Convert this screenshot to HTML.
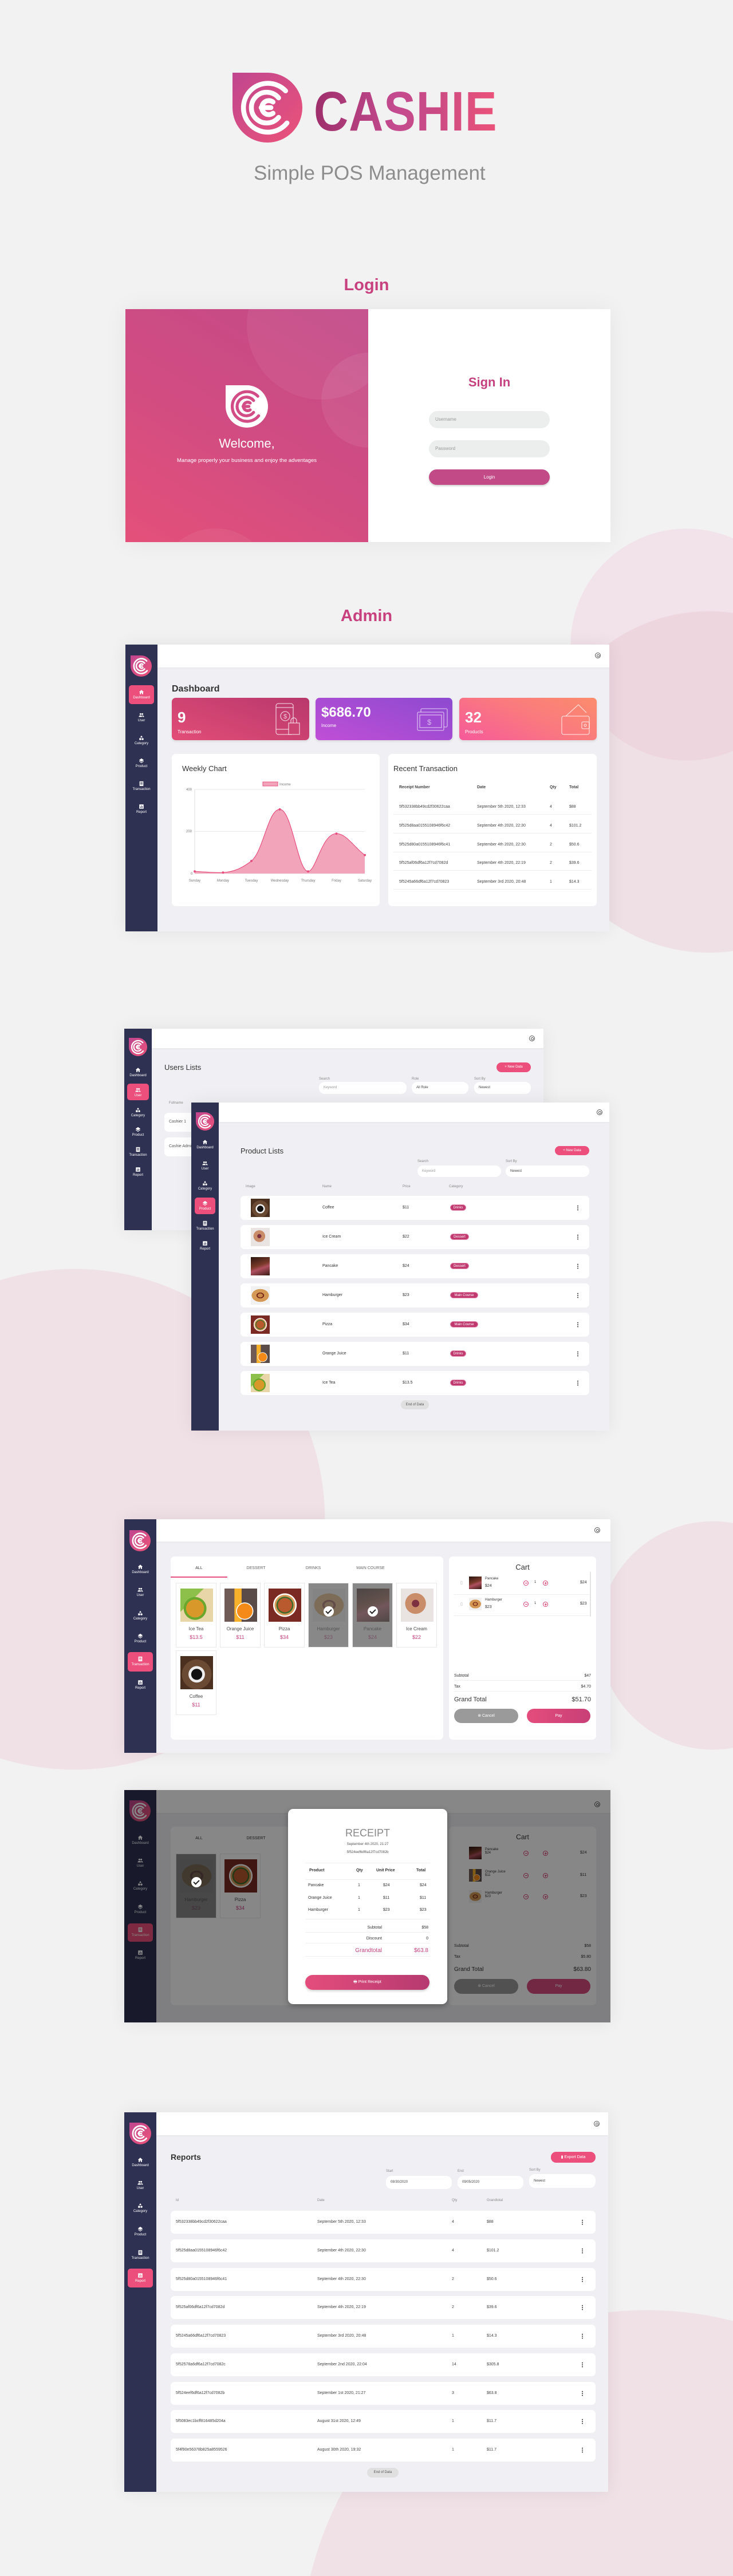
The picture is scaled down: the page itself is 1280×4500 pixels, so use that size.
<!DOCTYPE html>
<html style="overflow:hidden"><head><meta charset="utf-8">
<style>
*{box-sizing:border-box}
html{overflow:hidden;height:4500px}
body{margin:0;width:1280px;height:4500px;background:#f2f2f2;position:relative;overflow:hidden;font-family:"Liberation Sans",sans-serif;color:#333}
.a{position:absolute}
.circ{position:absolute;border-radius:50%;background:#f0e1e7}
.bc{position:absolute}
.fr{position:absolute;background:#f0f0f4;box-shadow:0 0 30px rgba(0,0,0,.07);overflow:hidden}
.sb{position:absolute;left:0;top:0;bottom:0;background:#2e3152}
.tb{position:absolute;top:0;right:0;background:#fff;box-shadow:0 1px 3px rgba(0,0,0,.05)}
.si{position:absolute;left:0;width:100%;text-align:center;color:#fff;font-size:6px;line-height:7px}
.si svg{display:block;margin:0 auto 2px;width:10px;height:10px;fill:#fff}
.act{position:absolute;background:#ec4f7c;border-radius:5px}
.lg{position:absolute}
.h{position:absolute;color:#c8417f;font-weight:bold;font-size:29px;width:100%;text-align:center;left:0}
.pf{position:absolute;width:10px;height:10px;border:1.3px solid #555;border-radius:50%}
.pf:after{content:"";position:absolute;left:2.2px;top:1.5px;width:3px;height:3px;border:1px solid #555;border-radius:50%}
.card{position:absolute;border-radius:7px;color:#fff;box-shadow:0 2px 4px rgba(0,0,0,.1)}
.pan{position:absolute;background:#fff;border-radius:7px}
.t{position:absolute;white-space:nowrap}
.row{position:absolute;background:#fff;border-radius:7px}
.dots{position:absolute;width:2px;height:10px;background:radial-gradient(circle,#444 0.9px,transparent 1.1px) 0 0/2px 3.4px}
.badge{position:absolute;height:11px;border-radius:6px;background:#c0396f;color:#fff;font-size:6px;line-height:11px;text-align:center;border:1px solid #e38cb0}
.inp{position:absolute;background:#fff;border-radius:10px;font-size:6px;color:#999;line-height:20px;padding-left:8px}
.btn{position:absolute;background:#ec4f7c;border-radius:9px;color:#fff;font-size:6px;text-align:center}
.f{position:absolute}
.coffee{background:radial-gradient(circle at 50% 55%,#111 0 22%,#eee 23% 33%,#6b4a33 34% 60%,#4b2f1f 61%)}
.ice{background:radial-gradient(circle at 45% 45%,#7d3040 0 14%,#c98d6a 15% 40%,#e9e4e2 41%)}
.pancake{background:linear-gradient(160deg,#2a1510,#7a3a2a 45%,#b05060 60%,#3a1a12)}
.burger{background:radial-gradient(ellipse 45% 35% at 50% 50%,#c98a4a 0 30%,#7a2a1a 31% 45%,#d49a55 46% 100%,transparent 101%),#f1f1f1}
.pizza{background:radial-gradient(circle,#b85a2d 0 30%,#3e6b2a 31% 36%,#d69a5a 37% 44%,#fff 45% 50%,#7a2a22 51%)}
.oj{background:radial-gradient(circle at 62% 68%,#f58a18 0 25%,#fff 26% 28%,transparent 29%),linear-gradient(90deg,#6f5a55 0 30%,#f6b02a 31% 52%,#5a4a48 53%)}
.tea{background:radial-gradient(circle at 45% 60%,#d9982a 0 33%,#6aa82d 34% 42%,transparent 43%),linear-gradient(135deg,#8cc04a 0 35%,#e8d6a8 36%)}
.pc{position:absolute;width:71px;height:113px;background:#fff;border:1px solid #e8e8e8}
.pc .f{left:7px;top:9px;width:57px;height:58px}
.pc .n{position:absolute;top:75px;width:100%;text-align:center;font-size:8px;color:#444}
.pc .p{position:absolute;top:89px;width:100%;text-align:center;font-size:9px;color:#c4407e}
.pc.sel:after{content:"";position:absolute;inset:0;background:rgba(90,90,90,.72)}
.chk{position:absolute;z-index:2;width:18px;height:18px;border-radius:50%;background:#fff;left:26px;top:40px}
.chk:after{content:"";position:absolute;left:6px;top:3px;width:4px;height:8px;border:solid #222;border-width:0 2px 2px 0;transform:rotate(45deg)}
.th{font-size:6px;color:#888}
.ci{position:absolute;width:9px;height:9px;border:1px solid #d83f70;border-radius:50%}
.ci:after{content:"";position:absolute;left:1.5px;top:3px;width:4px;height:1px;background:#d83f70}
.ci.pl:before{content:"";position:absolute;left:3px;top:1.5px;width:1px;height:4px;background:#d83f70}
</style></head><body>
<svg width="0" height="0" style="position:absolute;left:0;top:0">
<defs>
<linearGradient id="lgp" x1="0" y1="0" x2="1" y2="1"><stop offset="0" stop-color="#c0468f"/><stop offset="1" stop-color="#ec5379"/></linearGradient>
<symbol id="logo" viewBox="0 0 100 100"><path d="M0,0H50A50,50 0 1 1 0,50Z" fill="url(#lgp)"/><g fill="none" stroke="#fff" stroke-width="7" stroke-linecap="round"><path d="M76,26A35,35 0 1 0 78,72"/><path d="M66,36A22,22 0 1 0 66,64"/><path d="M58,42A10,10 0 1 0 58,58M41,50H55"/></g></symbol>
<symbol id="logow" viewBox="0 0 100 100"><path d="M0,0H50A50,50 0 1 1 0,50Z" fill="#fff"/><g fill="none" stroke="#d24c85" stroke-width="7" stroke-linecap="round"><path d="M76,26A35,35 0 1 0 78,72"/><path d="M66,36A22,22 0 1 0 66,64"/><path d="M58,42A10,10 0 1 0 58,58M41,50H55"/></g></symbol>
<symbol id="i1" viewBox="0 0 24 24"><path d="M12 3L2 12h3v9h5v-6h4v6h5v-9h3z"/></symbol>
<symbol id="i2" viewBox="0 0 24 24"><circle cx="8" cy="8" r="3.5"/><circle cx="16" cy="8" r="3.5"/><path d="M1 20c0-4 3-6 7-6s7 2 7 6zM14 14c4 0 9 1 9 6h-6c0-2-1-4-3-6z"/></symbol>
<symbol id="i3" viewBox="0 0 24 24"><path d="M12 2l5 8H7z"/><rect x="3" y="13" width="8" height="8"/><circle cx="17" cy="17" r="4"/></symbol>
<symbol id="i4" viewBox="0 0 24 24"><path d="M12 2l10 7-10 7L2 9zM4 13l8 6 8-6 2 1.5-10 7.5-10-7.5z"/></symbol>
<symbol id="i5" viewBox="0 0 24 24"><path fill-rule="evenodd" d="M4 2h16v20H4zM7 6h10v2H7zM7 10h10v2H7zM7 14h10v2H7z"/></symbol>
<symbol id="i6" viewBox="0 0 24 24"><path fill-rule="evenodd" d="M3 3h18v18H3zM7 12h2v6H7zM11 7h2v11h-2zM15 10h2v8h-2z"/></symbol>
</defs></svg>

<div class="bc" style="left:996px;top:923px;width:284px;height:406px;background:radial-gradient(circle 203px at 203px 203px,#f1e3e9 99.5%,transparent 100%)"></div>
<div class="bc" style="left:939px;top:1067px;width:341px;height:598px;background:radial-gradient(circle 299px at 299px 299px,rgba(232,190,205,.35) 99.5%,transparent 100%)"></div>
<div class="bc" style="left:0;top:2216px;width:568px;height:876px;background:radial-gradient(circle 438px at 130px 438px,#f0e1e7 99.7%,transparent 100%)"></div>
<div class="bc" style="left:1045px;top:2657px;width:235px;height:400px;background:radial-gradient(circle 200px at 200px 200px,#f0e1e7 99.5%,transparent 100%)"></div>
<div class="bc" style="left:525px;top:4035px;width:755px;height:465px;background:radial-gradient(circle 605px at 605px 605px,#f0e1e7 99.8%,transparent 100%)"></div>

<svg class="lg" style="left:406px;top:126px" width="122" height="124"><use href="#logo"/></svg>
<div class="t" style="left:548px;top:140px;font-size:97px;font-weight:bold;letter-spacing:1px;transform:scaleX(.86);transform-origin:left;background:linear-gradient(90deg,#9e2f6b,#c44b8f 45%,#c94a84 65%,#ec5379);-webkit-background-clip:text;background-clip:text;color:transparent;line-height:110px">CASHIE</div>
<div class="t" style="left:443px;top:283px;width:395px;text-align:center;font-size:35px;color:#8d8d8d">Simple POS Management</div>

<div class="h" style="top:482px">Login</div>
<div class="a" style="left:219px;top:540px;width:847px;height:407px;background:#fff;box-shadow:0 0 40px rgba(0,0,0,.06)">
 <div class="a" style="left:0;top:0;width:424px;height:407px;overflow:hidden;background:linear-gradient(30deg,#e4507a,#d04c82 50%,#c24a88)">
  <div class="circ" style="left:212px;top:-102px;width:260px;height:260px;background:rgba(255,255,255,.06)"></div>
  <div class="circ" style="left:342px;top:76px;width:166px;height:166px;background:rgba(255,255,255,.07)"></div>
  <div class="circ" style="left:57px;top:383px;width:200px;height:200px;background:rgba(255,255,255,.06)"></div>
  <svg class="lg" style="left:175px;top:133px" width="74" height="74"><use href="#logow"/></svg>
  <div class="t" style="left:0;width:424px;text-align:center;top:222px;color:#fff;font-size:22px">Welcome,</div>
  <div class="t" style="left:0;width:424px;text-align:center;top:259px;color:#fff;font-size:9.5px">Manage properly your business and enjoy the adventages</div>
 </div>
 <div class="t" style="left:530px;width:211px;text-align:center;top:115px;color:#c4407e;font-size:22px;font-weight:bold">Sign In</div>
 <div class="a" style="left:530px;top:178px;width:211px;height:30px;border-radius:15px;background:#eceeee;font-size:8px;color:#999;line-height:30px;padding-left:11px">Username</div>
 <div class="a" style="left:530px;top:229px;width:211px;height:30px;border-radius:15px;background:#eceeee;font-size:8px;color:#999;line-height:30px;padding-left:11px">Password</div>
 <div class="a" style="left:530px;top:280px;width:211px;height:27px;border-radius:14px;background:#c24a87;font-size:8px;color:#fff;line-height:27px;text-align:center;box-shadow:0 2px 3px rgba(0,0,0,.2)">Login</div>
</div>

<div class="h" style="top:1060px">Admin</div>
<div class="fr" style="left:219px;top:1126px;width:845px;height:501px">
 <div class="sb" style="width:56px">
  <svg class="lg" style="left:9px;top:19px" width="37" height="37"><use href="#logo"/></svg>
  <div class="act" style="left:6px;top:71px;width:44px;height:33px"></div>
  <div class="si" style="top:78px"><svg><use href="#i1"/></svg>Dashboard</div>
  <div class="si" style="top:118px"><svg><use href="#i2"/></svg>User</div>
  <div class="si" style="top:158px"><svg><use href="#i3"/></svg>Category</div>
  <div class="si" style="top:198px"><svg><use href="#i4"/></svg>Product</div>
  <div class="si" style="top:238px"><svg><use href="#i5"/></svg>Transaction</div>
  <div class="si" style="top:278px"><svg><use href="#i6"/></svg>Report</div>
 </div>
 <div class="tb" style="left:56px;height:40px"></div>
 <div class="pf" style="left:820px;top:14px"></div>
 <div class="t" style="left:81px;top:69px;font-size:16px;font-weight:bold;color:#333">Dashboard</div>
 <div class="card" style="left:81px;top:93px;width:240px;height:74px;background:linear-gradient(20deg,#e24d77,#b8386c)">
  <div class="t" style="left:10px;top:19px;font-size:26px;font-weight:bold">9</div>
  <div class="t" style="left:10px;top:55px;font-size:8px">Transaction</div>
  <svg class="a" style="left:180px;top:8px" width="46" height="58" fill="none" stroke="rgba(255,255,255,.7)" stroke-width="1.3"><rect x="2" y="2" width="30" height="54" rx="4"/><path d="M2 9h30M2 47h30"/><circle cx="18" cy="24" r="8"/><text x="15" y="28" font-size="11" fill="rgba(255,255,255,.7)" stroke="none">$</text><rect x="24" y="36" width="19" height="20" fill="#cc4472"/><path d="M28 36v-4a5 5 0 0 1 10 0v4"/></svg>
 </div>
 <div class="card" style="left:332px;top:93px;width:239px;height:74px;background:linear-gradient(20deg,#c04fd6,#8c4ad0)">
  <div class="t" style="left:10px;top:12px;font-size:24px;font-weight:bold">$686.70</div>
  <div class="t" style="left:10px;top:44px;font-size:8px">Income</div>
  <svg class="a" style="left:176px;top:17px" width="56" height="42" fill="none" stroke="rgba(255,255,255,.6)" stroke-width="1.3"><rect x="8" y="2" width="46" height="32" rx="2"/><rect x="2" y="8" width="46" height="32" rx="2" fill="#9f4bd3"/><rect x="6" y="13" width="38" height="22"/><text x="19" y="30" font-size="13" fill="rgba(255,255,255,.6)" stroke="none">$</text></svg>
 </div>
 <div class="card" style="left:583px;top:93px;width:240px;height:74px;background:linear-gradient(25deg,#f65a9a,#fa7a7e 55%,#fb8c6c)">
  <div class="t" style="left:10px;top:19px;font-size:26px;font-weight:bold">32</div>
  <div class="t" style="left:10px;top:55px;font-size:8px">Products</div>
  <svg class="a" style="left:176px;top:10px" width="56" height="58" fill="none" stroke="rgba(255,255,255,.7)" stroke-width="1.3"><path d="M10 22l22-20 14 14"/><rect x="3" y="22" width="48" height="32" rx="3"/><rect x="38" y="32" width="13" height="12" rx="2"/><circle cx="44" cy="38" r="2"/></svg>
 </div>
 <div class="pan" style="left:81px;top:191px;width:363px;height:266px">
  <div class="t" style="left:18px;top:18px;font-size:13px;color:#333">Weekly Chart</div>
  <svg class="a" style="left:0;top:0" width="363" height="266" font-family="Liberation Sans" font-size="6" fill="#777">
   <rect x="159" y="49" width="26" height="7" fill="#f2a5ba" stroke="#e8507f"/><text x="188" y="55">Income</text>
   <path d="M40 62H337M40 135.5H337M40 209H337" stroke="#e8e8e8"/><path d="M40 62V209" stroke="#ddd"/>
   <text x="25" y="64">400</text><text x="25" y="137">200</text><text x="33" y="211">0</text>
   <path d="M40,205.3 C60,206 70,208 89.5,207.2 C110,206 125,198 139,187 C160,170 168,97 188.5,96.9 C210,97 220,205 238,205.3 C252,205 262,139 287.5,139.2 C305,139 320,165 337,176.7 L337,209 L40,209Z" fill="#f2a5ba"/>
   <path d="M40,205.3 C60,206 70,208 89.5,207.2 C110,206 125,198 139,187 C160,170 168,97 188.5,96.9 C210,97 220,205 238,205.3 C252,205 262,139 287.5,139.2 C305,139 320,165 337,176.7" fill="none" stroke="#e8507f" stroke-width="1.2"/>
   <g fill="#e8507f"><circle cx="40" cy="205.3" r="2"/><circle cx="89.5" cy="207.2" r="2"/><circle cx="139" cy="187" r="2"/><circle cx="188.5" cy="96.9" r="2"/><circle cx="238" cy="205.3" r="2"/><circle cx="287.5" cy="139.2" r="2"/><circle cx="337" cy="176.7" r="2"/></g>
   <g text-anchor="middle"><text x="40" y="223">Sunday</text><text x="89.5" y="223">Monday</text><text x="139" y="223">Tuesday</text><text x="188.5" y="223">Wednesday</text><text x="238" y="223">Thursday</text><text x="287.5" y="223">Friday</text><text x="337" y="223">Saturday</text></g>
  </svg>
 </div>
 <div class="pan" style="left:459px;top:191px;width:364px;height:266px;font-size:7px;color:#444">
  <div class="t" style="left:9px;top:18px;font-size:13px;color:#333">Recent Transaction</div>
  <div class="t" style="left:19px;top:55px;font-weight:bold">Receipt Number</div><div class="t" style="left:155px;top:55px;font-weight:bold">Date</div><div class="t" style="left:282px;top:55px;font-weight:bold">Qty</div><div class="t" style="left:316px;top:55px;font-weight:bold">Total</div>
  <div class="a" style="left:9px;top:105px;width:346px;height:1px;background:#eee"></div>
  <div class="a" style="left:9px;top:138px;width:346px;height:1px;background:#eee"></div>
  <div class="a" style="left:9px;top:171px;width:346px;height:1px;background:#eee"></div>
  <div class="a" style="left:9px;top:203px;width:346px;height:1px;background:#eee"></div>
  <div class="a" style="left:9px;top:236px;width:346px;height:1px;background:#eee"></div>
  <div class="t" style="left:19px;top:89px">5f532338bb49cd2f30622caa</div><div class="t" style="left:155px;top:89px">September 5th 2020, 12:33</div><div class="t" style="left:282px;top:89px">4</div><div class="t" style="left:316px;top:89px">$88</div>
  <div class="t" style="left:19px;top:122px">5f525d8aa0155108946f6c42</div><div class="t" style="left:155px;top:122px">September 4th 2020, 22:30</div><div class="t" style="left:282px;top:122px">4</div><div class="t" style="left:316px;top:122px">$101.2</div>
  <div class="t" style="left:19px;top:155px">5f525d80a0155108946f6c41</div><div class="t" style="left:155px;top:155px">September 4th 2020, 22:30</div><div class="t" style="left:282px;top:155px">2</div><div class="t" style="left:316px;top:155px">$50.6</div>
  <div class="t" style="left:19px;top:187px">5f525af06df6a12f7cd7082d</div><div class="t" style="left:155px;top:187px">September 4th 2020, 22:19</div><div class="t" style="left:282px;top:187px">2</div><div class="t" style="left:316px;top:187px">$39.6</div>
  <div class="t" style="left:19px;top:220px">5f5245a66df6a12f7cd70823</div><div class="t" style="left:155px;top:220px">September 3rd 2020, 20:48</div><div class="t" style="left:282px;top:220px">1</div><div class="t" style="left:316px;top:220px">$14.3</div>
 </div>
</div>

<div class="fr" style="left:217px;top:1797px;width:732px;height:352px">
 <div class="sb" style="width:48px">
  <svg class="lg" style="left:8px;top:16px" width="32" height="32"><use href="#logo"/></svg>
  <div class="act" style="left:5px;top:96px;width:38px;height:29px"></div>
  <div class="si" style="top:67px"><svg><use href="#i1"/></svg>Dashboard</div>
  <div class="si" style="top:102px"><svg><use href="#i2"/></svg>User</div>
  <div class="si" style="top:137px"><svg><use href="#i3"/></svg>Category</div>
  <div class="si" style="top:171px"><svg><use href="#i4"/></svg>Product</div>
  <div class="si" style="top:206px"><svg><use href="#i5"/></svg>Transaction</div>
  <div class="si" style="top:241px"><svg><use href="#i6"/></svg>Report</div>
 </div>
 <div class="tb" style="left:48px;height:34px"></div>
 <div class="pf" style="left:707px;top:12px"></div>
 <div class="t" style="left:70px;top:60px;font-size:13px;color:#333">Users Lists</div>
 <div class="btn" style="left:650px;top:59px;width:60px;height:17px;line-height:17px">+ New Data</div>
 <div class="t th" style="left:340px;top:85px">Search</div><div class="inp" style="left:340px;top:93px;width:153px;height:21px">Keyword</div>
 <div class="t th" style="left:502px;top:85px">Role</div><div class="inp" style="left:502px;top:93px;width:99px;height:21px;color:#444">All Role</div>
 <div class="t th" style="left:611px;top:85px">Sort By</div><div class="inp" style="left:611px;top:93px;width:99px;height:21px;color:#444">Newest</div>
 <div class="t th" style="left:78px;top:127px">Fullname</div>
 <div class="row" style="left:70px;top:147px;width:640px;height:33px"><div class="t" style="left:8px;top:12px;font-size:7px;color:#555">Cashier 1</div></div>
 <div class="row" style="left:70px;top:190px;width:640px;height:33px"><div class="t" style="left:8px;top:12px;font-size:7px;color:#555">Cashie Admin</div></div>
</div>

<div class="fr" style="left:334px;top:1926px;width:730px;height:573px">
 <div class="sb" style="width:48px">
  <svg class="lg" style="left:8px;top:17px" width="32" height="32"><use href="#logo"/></svg>
  <div class="act" style="left:6px;top:166px;width:36px;height:29px"></div>
  <div class="si" style="top:64px"><svg><use href="#i1"/></svg>Dashboard</div>
  <div class="si" style="top:101px"><svg><use href="#i2"/></svg>User</div>
  <div class="si" style="top:136px"><svg><use href="#i3"/></svg>Category</div>
  <div class="si" style="top:171px"><svg><use href="#i4"/></svg>Product</div>
  <div class="si" style="top:206px"><svg><use href="#i5"/></svg>Transaction</div>
  <div class="si" style="top:241px"><svg><use href="#i6"/></svg>Report</div>
 </div>
 <div class="tb" style="left:48px;height:34px"></div>
 <div class="pf" style="left:708px;top:12px"></div>
 <div class="t" style="left:86px;top:77px;font-size:13px;color:#333">Product Lists</div>
 <div class="btn" style="left:635px;top:76px;width:60px;height:16px;line-height:16px">+ New Data</div>
 <div class="t th" style="left:395px;top:100px">Search</div><div class="inp" style="left:395px;top:110px;width:146px;height:20px">Keyword</div>
 <div class="t th" style="left:549px;top:100px">Sort By</div><div class="inp" style="left:549px;top:110px;width:146px;height:20px;color:#444">Newest</div>
 <div class="t th" style="left:95px;top:144px">Image</div><div class="t th" style="left:229px;top:144px">Name</div><div class="t th" style="left:369px;top:144px">Price</div><div class="t th" style="left:450px;top:144px">Category</div>
 <div class="row" style="left:86px;top:163px;width:609px;height:42px"><div class="f coffee" style="left:18px;top:5px;width:33px;height:32px"></div><div class="t" style="left:143px;top:17px;font-size:7px">Coffee</div><div class="t" style="left:283px;top:17px;font-size:7px">$11</div><div class="badge" style="left:366px;top:15px;width:28px">Drinks</div><div class="dots" style="left:588px;top:16px"></div></div>
 <div class="row" style="left:86px;top:214px;width:609px;height:42px"><div class="f ice" style="left:18px;top:5px;width:33px;height:32px"></div><div class="t" style="left:143px;top:17px;font-size:7px">Ice Cream</div><div class="t" style="left:283px;top:17px;font-size:7px">$22</div><div class="badge" style="left:366px;top:15px;width:33px">Dessert</div><div class="dots" style="left:588px;top:16px"></div></div>
 <div class="row" style="left:86px;top:265px;width:609px;height:42px"><div class="f pancake" style="left:18px;top:5px;width:33px;height:32px"></div><div class="t" style="left:143px;top:17px;font-size:7px">Pancake</div><div class="t" style="left:283px;top:17px;font-size:7px">$24</div><div class="badge" style="left:366px;top:15px;width:33px">Dessert</div><div class="dots" style="left:588px;top:16px"></div></div>
 <div class="row" style="left:86px;top:316px;width:609px;height:42px"><div class="f burger" style="left:18px;top:5px;width:33px;height:32px"></div><div class="t" style="left:143px;top:17px;font-size:7px">Hamburger</div><div class="t" style="left:283px;top:17px;font-size:7px">$23</div><div class="badge" style="left:366px;top:15px;width:49px">Main Course</div><div class="dots" style="left:588px;top:16px"></div></div>
 <div class="row" style="left:86px;top:367px;width:609px;height:42px"><div class="f pizza" style="left:18px;top:5px;width:33px;height:32px"></div><div class="t" style="left:143px;top:17px;font-size:7px">Pizza</div><div class="t" style="left:283px;top:17px;font-size:7px">$34</div><div class="badge" style="left:366px;top:15px;width:49px">Main Course</div><div class="dots" style="left:588px;top:16px"></div></div>
 <div class="row" style="left:86px;top:418px;width:609px;height:42px"><div class="f oj" style="left:18px;top:5px;width:33px;height:32px"></div><div class="t" style="left:143px;top:17px;font-size:7px">Orange Juice</div><div class="t" style="left:283px;top:17px;font-size:7px">$11</div><div class="badge" style="left:366px;top:15px;width:28px">Drinks</div><div class="dots" style="left:588px;top:16px"></div></div>
 <div class="row" style="left:86px;top:469px;width:609px;height:42px"><div class="f tea" style="left:18px;top:5px;width:33px;height:32px"></div><div class="t" style="left:143px;top:17px;font-size:7px">Ice Tea</div><div class="t" style="left:283px;top:17px;font-size:7px">$13.5</div><div class="badge" style="left:366px;top:15px;width:28px">Drinks</div><div class="dots" style="left:588px;top:16px"></div></div>
 <div class="a" style="left:366px;top:520px;width:49px;height:16px;border-radius:8px;background:#e0e0e0;font-size:6px;line-height:16px;text-align:center;color:#555">End of Data</div>
</div>

<div class="fr" style="left:217px;top:2654px;width:849px;height:408px">
 <div class="sb" style="width:56px">
  <svg class="lg" style="left:9px;top:19px" width="37" height="37"><use href="#logo"/></svg>
  <div class="act" style="left:6px;top:232px;width:44px;height:34px"></div>
  <div class="si" style="top:78px"><svg><use href="#i1"/></svg>Dashboard</div>
  <div class="si" style="top:118px"><svg><use href="#i2"/></svg>User</div>
  <div class="si" style="top:159px"><svg><use href="#i3"/></svg>Category</div>
  <div class="si" style="top:199px"><svg><use href="#i4"/></svg>Product</div>
  <div class="si" style="top:239px"><svg><use href="#i5"/></svg>Transaction</div>
  <div class="si" style="top:280px"><svg><use href="#i6"/></svg>Report</div>
 </div>
 <div class="tb" style="left:56px;height:39px"></div>
 <div class="pf" style="left:821px;top:14px"></div>
 <div class="pan" style="left:81px;top:65px;width:476px;height:320px">
  <div class="t" style="left:0;width:99px;text-align:center;top:17px;font-size:7px;color:#333">ALL</div>
  <div class="t" style="left:99px;width:100px;text-align:center;top:17px;font-size:7px;color:#666">DESSERT</div>
  <div class="t" style="left:199px;width:100px;text-align:center;top:17px;font-size:7px;color:#666">DRINKS</div>
  <div class="t" style="left:299px;width:100px;text-align:center;top:17px;font-size:7px;color:#666">MAIN COURSE</div>
  <div class="a" style="left:0;top:35px;width:99px;height:2px;background:#e8507f"></div>
  <div class="pc" style="left:9px;top:46px"><div class="f tea"></div><div class="n">Ice Tea</div><div class="p">$13.5</div></div>
  <div class="pc" style="left:86px;top:46px"><div class="f oj"></div><div class="n">Orange Juice</div><div class="p">$11</div></div>
  <div class="pc" style="left:163px;top:46px"><div class="f pizza"></div><div class="n">Pizza</div><div class="p">$34</div></div>
  <div class="pc sel" style="left:240px;top:46px"><div class="f burger"></div><div class="n">Hamburger</div><div class="p">$23</div><div class="chk"></div></div>
  <div class="pc sel" style="left:317px;top:46px"><div class="f pancake"></div><div class="n">Pancake</div><div class="p">$24</div><div class="chk"></div></div>
  <div class="pc" style="left:394px;top:46px"><div class="f ice"></div><div class="n">Ice Cream</div><div class="p">$22</div></div>
  <div class="pc" style="left:9px;top:164px"><div class="f coffee"></div><div class="n">Coffee</div><div class="p">$11</div></div>
 </div>
 <div class="pan" style="left:567px;top:65px;width:257px;height:320px;font-size:7px;color:#333">
  <div class="t" style="left:0;width:257px;text-align:center;top:11px;font-size:13px">Cart</div>
  <div class="a" style="left:246px;top:27px;width:2px;height:78px;background:#e4e4e4"></div>
  <div class="t" style="left:20px;top:42px;color:#aaa">▯</div><div class="f pancake" style="left:35px;top:35px;width:22px;height:22px"></div>
  <div class="t" style="left:63px;top:36px;font-size:6px">Pancake</div><div class="t" style="left:63px;top:48px">$24</div>
  <div class="ci" style="left:130px;top:42px"></div><div class="t" style="left:149px;top:42px;font-size:6px">1</div><div class="ci pl" style="left:164px;top:42px"></div>
  <div class="t" style="left:229px;top:42px">$24</div>
  <div class="a" style="left:9px;top:66px;width:236px;height:1px;background:#eee"></div>
  <div class="t" style="left:20px;top:79px;color:#aaa">▯</div><div class="f burger" style="left:35px;top:72px;width:22px;height:22px"></div>
  <div class="t" style="left:63px;top:73px;font-size:6px">Hamburger</div><div class="t" style="left:63px;top:85px">$23</div>
  <div class="ci" style="left:130px;top:79px"></div><div class="t" style="left:149px;top:79px;font-size:6px">1</div><div class="ci pl" style="left:164px;top:79px"></div>
  <div class="t" style="left:229px;top:79px">$23</div>
  <div class="a" style="left:9px;top:103px;width:236px;height:1px;background:#eee"></div>
  <div class="t" style="left:9px;top:205px">Subtotal</div><div class="t" style="right:9px;top:205px">$47</div>
  <div class="a" style="left:9px;top:216px;width:239px;height:1px;background:#eee"></div>
  <div class="t" style="left:9px;top:224px">Tax</div><div class="t" style="right:9px;top:224px">$4.70</div>
  <div class="a" style="left:9px;top:235px;width:239px;height:1px;background:#eee"></div>
  <div class="t" style="left:9px;top:244px;font-size:11px">Grand Total</div><div class="t" style="right:9px;top:244px;font-size:11px">$51.70</div>
  <div class="a" style="left:9px;top:266px;width:112px;height:25px;border-radius:13px;background:#9a9a9a;color:#fff;font-size:7px;line-height:25px;text-align:center">⊗ Cancel</div>
  <div class="a" style="left:136px;top:266px;width:111px;height:25px;border-radius:13px;background:linear-gradient(90deg,#e44d7c,#c83f77);color:#fff;font-size:7px;line-height:25px;text-align:center">Pay</div>
 </div>
</div>

<div class="fr" style="left:217px;top:3127px;width:849px;height:406px">
 <div class="sb" style="width:56px">
  <svg class="lg" style="left:9px;top:18px" width="37" height="37"><use href="#logo"/></svg>
  <div class="act" style="left:6px;top:233px;width:44px;height:32px"></div>
  <div class="si" style="top:78px"><svg><use href="#i1"/></svg>Dashboard</div>
  <div class="si" style="top:118px"><svg><use href="#i2"/></svg>User</div>
  <div class="si" style="top:158px"><svg><use href="#i3"/></svg>Category</div>
  <div class="si" style="top:199px"><svg><use href="#i4"/></svg>Product</div>
  <div class="si" style="top:239px"><svg><use href="#i5"/></svg>Transaction</div>
  <div class="si" style="top:279px"><svg><use href="#i6"/></svg>Report</div>
 </div>
 <div class="tb" style="left:56px;height:40px"></div>
 <div class="pf" style="left:821px;top:20px"></div>
 <div class="pan" style="left:81px;top:64px;width:476px;height:312px">
  <div class="t" style="left:0;width:99px;text-align:center;top:17px;font-size:7px">ALL</div>
  <div class="t" style="left:99px;width:100px;text-align:center;top:17px;font-size:7px">DESSERT</div>
  <div class="pc sel" style="left:9px;top:47px"><div class="f burger"></div><div class="n">Hamburger</div><div class="p">$23</div><div class="chk"></div></div>
  <div class="pc" style="left:86px;top:47px"><div class="f pizza"></div><div class="n">Pizza</div><div class="p">$34</div></div>
 </div>
 <div class="pan" style="left:567px;top:64px;width:257px;height:312px;font-size:7px;color:#333">
  <div class="t" style="left:0;width:257px;text-align:center;top:11px;font-size:12px">Cart</div>
  <div class="f pancake" style="left:35px;top:35px;width:22px;height:22px"></div><div class="t" style="left:63px;top:37px;font-size:6px">Pancake<br>$24</div><div class="ci" style="left:130px;top:42px"></div><div class="ci pl" style="left:164px;top:42px"></div><div class="t" style="left:229px;top:42px">$24</div>
  <div class="f oj" style="left:35px;top:74px;width:22px;height:22px"></div><div class="t" style="left:63px;top:76px;font-size:6px">Orange Juice<br>$11</div><div class="ci" style="left:130px;top:81px"></div><div class="ci pl" style="left:164px;top:81px"></div><div class="t" style="left:229px;top:81px">$11</div>
  <div class="f burger" style="left:35px;top:111px;width:22px;height:22px"></div><div class="t" style="left:63px;top:113px;font-size:6px">Hamburger<br>$23</div><div class="ci" style="left:130px;top:118px"></div><div class="ci pl" style="left:164px;top:118px"></div><div class="t" style="left:229px;top:118px">$23</div>
  <div class="t" style="left:9px;top:205px">Subtotal</div><div class="t" style="right:9px;top:205px">$58</div>
  <div class="t" style="left:9px;top:224px">Tax</div><div class="t" style="right:9px;top:224px">$5.80</div>
  <div class="t" style="left:9px;top:244px;font-size:10px">Grand Total</div><div class="t" style="right:9px;top:244px;font-size:10px">$63.80</div>
  <div class="a" style="left:9px;top:266px;width:112px;height:26px;border-radius:13px;background:#9a9a9a;color:#fff;line-height:26px;text-align:center">⊗ Cancel</div>
  <div class="a" style="left:136px;top:266px;width:111px;height:26px;border-radius:13px;background:#d84c7e;color:#fff;line-height:26px;text-align:center">Pay</div>
 </div>
 <div class="a" style="left:0;top:0;width:849px;height:406px;background:rgba(0,0,0,.47)"></div>
 <div class="a" style="left:286px;top:33px;width:278px;height:341px;background:#fff;border-radius:9px;box-shadow:0 3px 10px rgba(0,0,0,.3);font-size:7px;color:#333">
  <div class="t" style="left:0;width:278px;text-align:center;top:32px;font-size:18px;color:#888">RECEIPT</div>
  <div class="t" style="left:0;width:278px;text-align:center;top:59px;font-size:6px;color:#555">September 4th 2020, 21:27</div>
  <div class="t" style="left:0;width:278px;text-align:center;top:73px;font-size:6px;color:#555">5f524eef6df6a12f7cd7082b</div>
  <div class="a" style="left:30px;top:94px;width:218px;height:1px;background:#eee"></div>
  <div class="t" style="left:37px;top:104px;font-weight:bold">Product</div><div class="t" style="left:119px;top:104px;font-weight:bold">Qty</div><div class="t" style="left:154px;top:104px;font-weight:bold">Unit Price</div><div class="t" style="left:224px;top:104px;font-weight:bold">Total</div>
  <div class="a" style="left:30px;top:123px;width:218px;height:1px;background:#eee"></div>
  <div class="t" style="left:35px;top:130px">Pancake</div><div class="t" style="left:122px;top:130px">1</div><div class="t" style="left:166px;top:130px">$24</div><div class="t" style="left:230px;top:130px">$24</div>
  <div class="t" style="left:35px;top:152px">Orange Juice</div><div class="t" style="left:122px;top:152px">1</div><div class="t" style="left:166px;top:152px">$11</div><div class="t" style="left:230px;top:152px">$11</div>
  <div class="t" style="left:35px;top:173px">Hamburger</div><div class="t" style="left:122px;top:173px">1</div><div class="t" style="left:166px;top:173px">$23</div><div class="t" style="left:230px;top:173px">$23</div>
  <div class="a" style="left:30px;top:192px;width:218px;height:1px;background:#eee"></div>
  <div class="t" style="right:114px;top:204px">Subtotal</div><div class="t" style="right:33px;top:204px">$58</div>
  <div class="a" style="left:30px;top:215px;width:218px;height:1px;background:#eee"></div>
  <div class="t" style="right:114px;top:223px">Discount</div><div class="t" style="right:33px;top:223px">0</div>
  <div class="a" style="left:30px;top:234px;width:218px;height:1px;background:#eee"></div>
  <div class="t" style="right:114px;top:242px;font-size:10px;color:#c4407e">Grandtotal</div><div class="t" style="right:33px;top:242px;font-size:10px;color:#c4407e">$63.8</div>
  <div class="a" style="left:30px;top:257px;width:218px;height:1px;background:#eee"></div>
  <div class="a" style="left:30px;top:290px;width:217px;height:26px;border-radius:13px;background:linear-gradient(90deg,#e44d7c,#b63a70);color:#fff;text-align:center;line-height:26px;box-shadow:0 2px 4px rgba(0,0,0,.2)">🖶 Print Receipt</div>
 </div>
</div>

<div class="fr" style="left:217px;top:3690px;width:845px;height:663px;font-size:7px;color:#444">
 <div class="sb" style="width:56px">
  <svg class="lg" style="left:9px;top:18px" width="38" height="38"><use href="#logo"/></svg>
  <div class="act" style="left:6px;top:273px;width:44px;height:33px"></div>
  <div class="si" style="top:78px"><svg><use href="#i1"/></svg>Dashboard</div>
  <div class="si" style="top:118px"><svg><use href="#i2"/></svg>User</div>
  <div class="si" style="top:158px"><svg><use href="#i3"/></svg>Category</div>
  <div class="si" style="top:199px"><svg><use href="#i4"/></svg>Product</div>
  <div class="si" style="top:240px"><svg><use href="#i5"/></svg>Transaction</div>
  <div class="si" style="top:280px"><svg><use href="#i6"/></svg>Report</div>
 </div>
 <div class="tb" style="left:56px;height:40px"></div>
 <div class="pf" style="left:820px;top:15px"></div>
 <div class="t" style="left:81px;top:70px;font-size:14px;font-weight:bold;color:#333">Reports</div>
 <div class="btn" style="left:745px;top:69px;width:78px;height:19px;line-height:19px;font-size:7px">▮ Export Data</div>
 <div class="t th" style="left:457px;top:100px">Start</div><div class="inp" style="left:457px;top:111px;width:115px;height:23px;line-height:23px;color:#444">08/30/2020</div>
 <div class="t th" style="left:582px;top:100px">End</div><div class="inp" style="left:582px;top:111px;width:115px;height:23px;line-height:23px;color:#444">09/05/2020</div>
 <div class="t th" style="left:707px;top:98px">Sort By</div><div class="inp" style="left:707px;top:108px;width:116px;height:24px;line-height:24px;color:#444">Newest</div>
 <div class="t th" style="left:90px;top:151px">Id</div><div class="t th" style="left:337px;top:151px">Date</div><div class="t th" style="left:572px;top:151px">Qty</div><div class="t th" style="left:633px;top:151px">Grandtotal</div>
 <div class="row" style="left:81px;top:172px;width:742px;height:40px"><span class="t" style="left:9px;top:16px">5f532338bb49cd2f30622caa</span><span class="t" style="left:256px;top:16px">September 5th 2020, 12:33</span><span class="t" style="left:491px;top:16px">4</span><span class="t" style="left:552px;top:16px">$88</span><div class="dots" style="left:718px;top:15px"></div></div>
 <div class="row" style="left:81px;top:222px;width:742px;height:40px"><span class="t" style="left:9px;top:16px">5f525d8aa0155108946f6c42</span><span class="t" style="left:256px;top:16px">September 4th 2020, 22:30</span><span class="t" style="left:491px;top:16px">4</span><span class="t" style="left:552px;top:16px">$101.2</span><div class="dots" style="left:718px;top:15px"></div></div>
 <div class="row" style="left:81px;top:272px;width:742px;height:40px"><span class="t" style="left:9px;top:16px">5f525d80a0155108946f6c41</span><span class="t" style="left:256px;top:16px">September 4th 2020, 22:30</span><span class="t" style="left:491px;top:16px">2</span><span class="t" style="left:552px;top:16px">$50.6</span><div class="dots" style="left:718px;top:15px"></div></div>
 <div class="row" style="left:81px;top:321px;width:742px;height:40px"><span class="t" style="left:9px;top:16px">5f525af06df6a12f7cd7082d</span><span class="t" style="left:256px;top:16px">September 4th 2020, 22:19</span><span class="t" style="left:491px;top:16px">2</span><span class="t" style="left:552px;top:16px">$39.6</span><div class="dots" style="left:718px;top:15px"></div></div>
 <div class="row" style="left:81px;top:371px;width:742px;height:40px"><span class="t" style="left:9px;top:16px">5f5245a66df6a12f7cd70823</span><span class="t" style="left:256px;top:16px">September 3rd 2020, 20:48</span><span class="t" style="left:491px;top:16px">1</span><span class="t" style="left:552px;top:16px">$14.3</span><div class="dots" style="left:718px;top:15px"></div></div>
 <div class="row" style="left:81px;top:421px;width:742px;height:40px"><span class="t" style="left:9px;top:16px">5f52578a6df6a12f7cd7082c</span><span class="t" style="left:256px;top:16px">September 2nd 2020, 22:04</span><span class="t" style="left:491px;top:16px">14</span><span class="t" style="left:552px;top:16px">$305.8</span><div class="dots" style="left:718px;top:15px"></div></div>
 <div class="row" style="left:81px;top:471px;width:742px;height:40px"><span class="t" style="left:9px;top:16px">5f524eef6df6a12f7cd7082b</span><span class="t" style="left:256px;top:16px">September 1st 2020, 21:27</span><span class="t" style="left:491px;top:16px">3</span><span class="t" style="left:552px;top:16px">$63.8</span><div class="dots" style="left:718px;top:15px"></div></div>
 <div class="row" style="left:81px;top:520px;width:742px;height:40px"><span class="t" style="left:9px;top:16px">5f5083ec1bcff816485d204a</span><span class="t" style="left:256px;top:16px">August 31st 2020, 12:49</span><span class="t" style="left:491px;top:16px">1</span><span class="t" style="left:552px;top:16px">$11.7</span><div class="dots" style="left:718px;top:15px"></div></div>
 <div class="row" style="left:81px;top:570px;width:742px;height:40px"><span class="t" style="left:9px;top:16px">5f4f90e56378b825a8559526</span><span class="t" style="left:256px;top:16px">August 30th 2020, 19:32</span><span class="t" style="left:491px;top:16px">1</span><span class="t" style="left:552px;top:16px">$11.7</span><div class="dots" style="left:718px;top:15px"></div></div>
 <div class="a" style="left:424px;top:621px;width:55px;height:17px;border-radius:9px;background:#e0e0e0;font-size:6px;line-height:17px;text-align:center;color:#555">End of Data</div>
</div>
</body></html>
